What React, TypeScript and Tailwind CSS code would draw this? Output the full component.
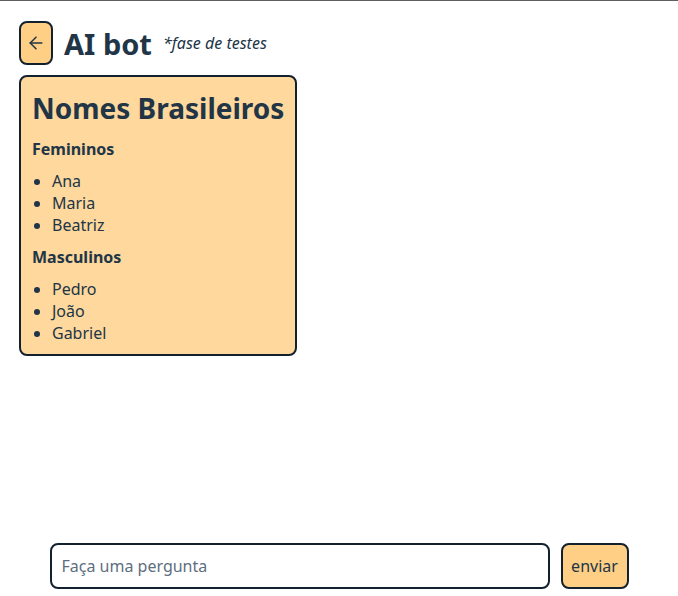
import React, { useState } from "react";

const femininos = ["Ana", "Maria", "Beatriz"];
const masculinos = ["Pedro", "João", "Gabriel"];

function BackIcon() {
  return (
    <svg width="20" height="20" viewBox="0 0 24 24" fill="none" stroke="currentColor" strokeWidth="1.8" strokeLinecap="round" strokeLinejoin="round">
      <path d="M19 12H5" />
      <path d="M12 19l-7-7 7-7" />
    </svg>
  );
}

export default function App() {
  const [pergunta, setPergunta] = useState("");

  return (
    <div
      className="h-screen flex flex-col border-t border-[#5f5f5f] bg-white text-[#213547]"
      style={{ fontFamily: '"Noto Sans", "Open Sans", sans-serif' }}
    >
      <header className="flex items-center gap-[11px] px-[19px] pt-5">
        <button className="w-[34px] h-[44px] flex items-center justify-center rounded-lg border-2 border-[#13202e] bg-[#fecf85] text-[#213547]">
          <BackIcon />
        </button>
        <h1 className="text-[29px] font-bold leading-none">AI bot</h1>
        <span className="text-base italic">*fase de testes</span>
      </header>

      <main className="flex-1 px-[19px] pt-[10px]">
        <div className="w-[278px] rounded-lg border-2 border-[#13202e] bg-[#fed89c] px-[11px] pt-[13px] pb-[10px]">
          <h2 className="text-[28px] leading-9 font-bold mb-3 whitespace-nowrap">Nomes Brasileiros</h2>
          <h3 className="text-base leading-[22px] font-bold mb-2.5">Femininos</h3>
          <ul className="list-disc pl-5 text-base leading-[22px] mb-2.5">
            {femininos.map((n) => (
              <li key={n}>{n}</li>
            ))}
          </ul>
          <h3 className="text-base leading-[22px] font-bold mb-2.5">Masculinos</h3>
          <ul className="list-disc pl-5 text-base leading-[22px]">
            {masculinos.map((n) => (
              <li key={n}>{n}</li>
            ))}
          </ul>
        </div>
      </main>

      <form
        className="flex justify-center gap-[11px] pb-[7px]"
        onSubmit={(e) => e.preventDefault()}
      >
        <input
          value={pergunta}
          onChange={(e) => setPergunta(e.target.value)}
          placeholder="Faça uma pergunta"
          className="w-[500px] h-[46px] rounded-lg border-2 border-[#13202e] px-[10px] text-base text-[#213547] placeholder:text-[#5d6e80] outline-none"
        />
        <button
          type="submit"
          className="w-[68px] h-[46px] rounded-lg border-2 border-[#13202e] bg-[#fecf85] text-base text-[#213547]"
        >
          enviar
        </button>
      </form>
    </div>
  );
}
